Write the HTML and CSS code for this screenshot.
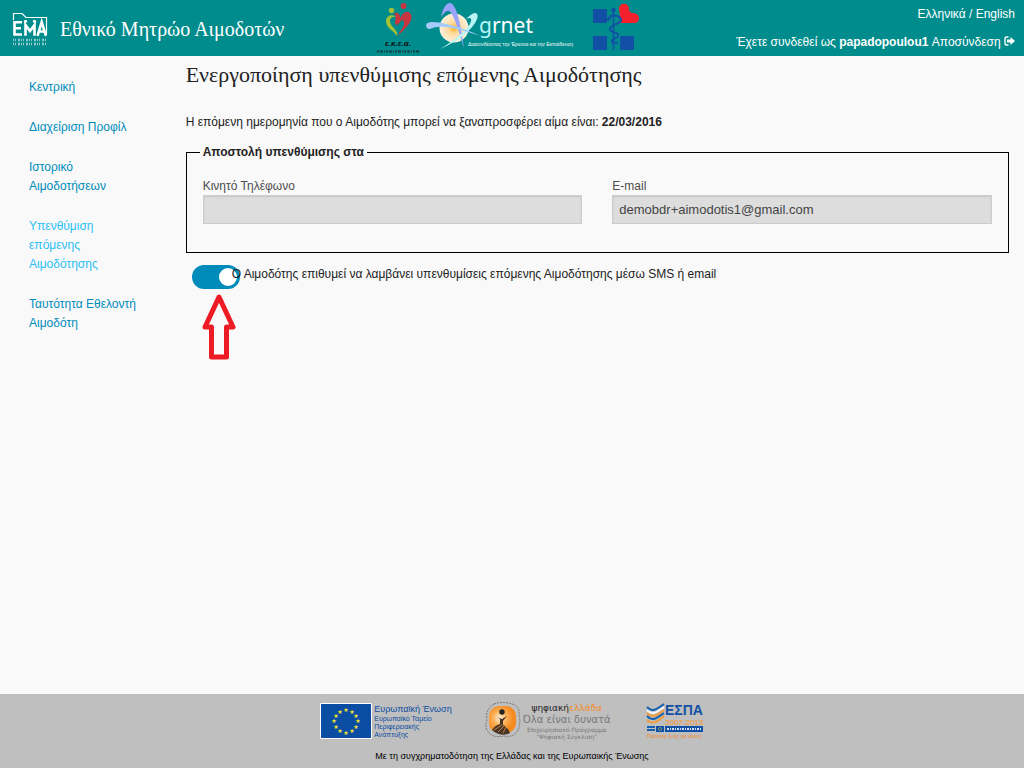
FILE: index.html
```html
<!DOCTYPE html>
<html lang="el">
<head>
    <meta charset="UTF-8">
    <meta name="viewport" content="width=device-width, initial-scale=1.0">
    <title>Εθνικό Μητρώο Αιμοδοτών</title>
    <link rel="stylesheet" href="styles.css">
</head>
<body>
    <header class="topbar">
        <div class="brand">
            <svg class="brand-logo" width="36" height="36" viewBox="0 0 36 36" role="img" aria-label="ΕΜΑ">
                <path d="M1.500 9V2.500H10l4 4H34.500V24" fill="none" stroke="#fff" stroke-width="1.200"/>
                <g fill="none" stroke="#fff" stroke-width="2.600">
                    <path d="M10 11.300H2.500V23.500H10M2.500 17.300H9"/>
                    <path d="M13.500 24.800V14l4.500 6 4.500-6v10.800"/>
                    <path d="M25.500 24.800L29.700 11l4.200 13.800M27 20.500h6"/>
                </g>
                <circle cx="13.500" cy="10.300" r="1.600" fill="#fff"/>
                <circle cx="22.500" cy="10.300" r="1.600" fill="#fff"/>
                <path d="M1 29H35M1 33H35" stroke="#8fcccc" stroke-width="2.500" stroke-dasharray="1 1 1 2 2 1"/>
            </svg>
            <span class="brand-name">Εθνικό Μητρώο Αιμοδοτών</span>
        </div>

        <div class="partners">
            <svg width="44" height="54" viewBox="0 0 44 54" role="img" aria-label="ε.κ.ε.α.">
                <circle cx="14.500" cy="10.500" r="2.700" fill="#a3c037"/>
                <circle cx="26.500" cy="6" r="2.900" fill="#c8373f"/>
                <path d="M20 17C14 13 9 16 9 21c0 7 7 9 11 15 2-6-7-9-7-15 0-4 4-5 7-4z" fill="#a3c037"/>
                <path d="M17 13c5-1 7 3 6 6 2-6 7-9 10-6 5 6-3 15-13 23 4-6 7-9 7-13 0-3-2-4-4-1-2 4-5 4-5 0 1-4 1-7-1-9z" fill="#c8373f"/>
                <text class="ekea-name" x="8" y="46">ε.κ.ε.α.</text>
                <path d="M0 51.500H43" stroke="#123f3f" stroke-width="2" stroke-dasharray="2 1 3 1 1 1"/>
            </svg>
            <svg width="162" height="54" viewBox="0 0 162 54" role="img" aria-label="grnet">
                <defs>
                    <radialGradient id="sun">
                        <stop offset="0" stop-color="#fdb31b"/>
                        <stop offset="0.400" stop-color="#fddba0"/>
                        <stop offset="1" stop-color="#fdf0dc"/>
                    </radialGradient>
                </defs>
                <circle cx="29" cy="28" r="14.500" fill="url(#sun)"/>
                <path d="M16 17C18 8 21 3 25 3c5 0 10 14 14 45C32 25 28 13 24 11c-3-1-5 3-8 6z" fill="#9aa3fa"/>
                <path d="M40 20c5-5 10-9 12-6 4 6-12 25-37 35 19-11 33-25 31-30-1-2-4-1-6 1z" fill="#b9f4f6"/>
                <path d="M2 28c-4-7 7-7 19-4 15 3 25 8 35 12-17-5-32-10-43-9-6 0-9 4-11 1z" fill="#a5cbfa"/>
                <text class="grnet-name" x="54" y="33"><tspan class="grnet-pale">g</tspan>rnet</text>
                <text class="grnet-tag" x="43" y="46">Διασυνδέοντας την Έρευνα και την Εκπαίδευση</text>
            </svg>
            <svg width="48" height="54" viewBox="0 0 48 54" role="img" aria-label="Υπουργείο Υγείας">
                <path d="M0 9h14v14H0zM0 36h14v14H0zM27 36h14v14H27z" fill="#1150a5"/>
                <path d="M26 9c0-7 10-7 10 0 0 2 1 3 3 4 3 0 7 1 7 5 0 3-2 5-5 5H28z" fill="#f5202c"/>
                <circle cx="20.500" cy="10" r="2.200" fill="#1150a5"/>
                <path d="M20.500 10V50" stroke="#1150a5" stroke-width="1.500"/>
                <path d="M16 18c2-4 10-3 12 1 2 5-11 5-11 10 0 4 10 3 8 7-1 3-6 2-6 5s5 2 6 1" fill="none" stroke="#1150a5" stroke-width="2"/>
                <path d="M10 22l3-3 2 1 3-4" fill="none" stroke="#1150a5" stroke-width="2"/>
            </svg>
        </div>

        <div class="account">
            <div class="languages"><a href="#">Ελληνικά</a> / <a href="#">English</a></div>
            <div class="session">
                Έχετε συνδεθεί ως <strong>papadopoulou1</strong>
                <a href="#">Αποσύνδεση
                    <svg width="11" height="10" viewBox="0 0 11 10" aria-hidden="true">
                        <path d="M4.500 1H2.500Q1 1 1 2.500V7.500Q1 9 2.500 9H4.500" fill="none" stroke="#fff" stroke-width="1.400"/>
                        <path d="M3 3.500H6.500V1L11 5 6.500 9V6.500H3z" fill="#fff"/>
                    </svg></a>
            </div>
        </div>
    </header>

    <div class="page">
        <nav class="sidebar">
            <a href="#">Κεντρική</a>
            <a href="#">Διαχείριση Προφίλ</a>
            <a href="#">Ιστορικό Αιμοδοτήσεων</a>
            <a href="#" class="active">Υπενθύμιση επόμενης Αιμοδότησης</a>
            <a href="#">Ταυτότητα Εθελοντή Αιμοδότη</a>
        </nav>

        <main class="content">
            <h1>Ενεργοποίηση υπενθύμισης επόμενης Αιμοδότησης</h1>
            <p class="next-date">Η επόμενη ημερομηνία που ο Αιμοδότης μπορεί να ξαναπροσφέρει αίμα είναι: <strong>22/03/2016</strong></p>

            <form>
                <fieldset>
                    <legend>Αποστολή υπενθύμισης στα</legend>
                    <div class="fields">
                        <div class="field">
                            <label for="phone">Κινητό Τηλέφωνο</label>
                            <input type="text" id="phone" readonly>
                        </div>
                        <div class="field">
                            <label for="email">E-mail</label>
                            <input type="text" id="email" value="demobdr+aimodotis1@gmail.com" readonly>
                        </div>
                    </div>
                </fieldset>

                <div class="reminder">
                    <input type="checkbox" id="reminder" class="switch" checked>
                    <label for="reminder">Ο Αιμοδότης επιθυμεί να λαμβάνει υπενθυμίσεις επόμενης Αιμοδότησης μέσω SMS ή email</label>
                    <svg class="pointer" width="36" height="68" viewBox="0 0 36 68" aria-hidden="true">
                        <path d="M18 4L32 34H25.500V64H10.500V34H4z" fill="none" stroke="#ed1c24" stroke-width="5" stroke-linejoin="round"/>
                    </svg>
                </div>
            </form>
        </main>
    </div>

    <footer class="footer">
        <div class="sponsors">
            <div class="eu">
                <svg width="52" height="36" viewBox="0 0 52 36" aria-hidden="true">
                    <path d="M.5.500h51v35H.5z" fill="#0b4da2" stroke="#fff"/>
                    <g class="eu-stars">
                        <text x="26" y="9">★</text><text x="32" y="11">★</text><text x="36" y="15">★</text>
                        <text x="38" y="20">★</text><text x="36" y="26">★</text><text x="32" y="30">★</text>
                        <text x="26" y="32">★</text><text x="20" y="30">★</text><text x="16" y="26">★</text>
                        <text x="14" y="20">★</text><text x="16" y="15">★</text><text x="20" y="11">★</text>
                    </g>
                </svg>
                <div class="eu-text">
                    <span class="eu-title">Ευρωπαϊκή Ένωση</span>
                    <span>Ευρωπαϊκό Ταμείο</span>
                    <span>Περιφερειακής</span>
                    <span>Ανάπτυξης</span>
                </div>
            </div>
            <div class="digital">
                <svg width="36" height="36" viewBox="0 0 36 36" aria-hidden="true">
                    <defs>
                        <radialGradient id="orb" cx="0.400" cy="0.450">
                            <stop offset="0" stop-color="#fff3df"/>
                            <stop offset="0.500" stop-color="#fbb25a"/>
                            <stop offset="1" stop-color="#f58a1f"/>
                        </radialGradient>
                    </defs>
                    <path d="M9 2Q18-1 27 2 35 4 34 13 36 22 33 28 29 36 19 34 9 36 4 31-1 26 2 18 0 7 9 2z" fill="none" stroke="#666" stroke-width=".8" stroke-dasharray="2 1"/>
                    <rect x="4" y="4" width="27" height="27" rx="10" fill="url(#orb)"/>
                    <circle cx="17" cy="10" r="2.700" fill="#222"/>
                    <path d="M12 15l5 2 5-3-4 5v4c4 2 6 5 7 8-5 3-13 2-18-3 3-4 5-5 8-6v-5z" fill="#493626"/>
                    <path d="M9 28l8-5M13 30l6-6M18 31l3-6" stroke="#f1a14d" stroke-width=".7"/>
                </svg>
                <div class="digital-text">
                    <span class="digital-title">ψηφιακή<b>ελλάδα</b></span>
                    <span class="digital-motto">Όλα είναι δυνατά</span>
                    <span>Επιχειρησιακό Πρόγραμμα</span>
                    <span>"Ψηφιακή Σύγκλιση"</span>
                </div>
            </div>
            <svg width="60" height="40" viewBox="0 0 60 40" role="img" aria-label="ΕΣΠΑ 2007-2013">
                <g fill="none" stroke-width="2">
                    <path d="M3 5c5 6 10 2 17-3" stroke="#1762ae"/>
                    <path d="M3 8c5 6 10 2 17-3" stroke="#f4f6f8"/>
                    <path d="M3 11c5 6 10 2 17-3" stroke="#f29a35"/>
                    <path d="M3 14c5 6 10 2 17-3" stroke="#1762ae"/>
                    <path d="M3 18c5 5 10 2 17-4" stroke="#f29a35"/>
                </g>
                <text class="espa-name" x="21" y="13">ΕΣΠΑ</text>
                <text class="espa-years" x="21" y="23">2007-2013</text>
                <path d="M3 25h8M3 28h8" stroke="#1762ae" stroke-width="2"/>
                <path d="M12 24h8v6h-8zM21 24h38v6H21z" fill="#1150a5"/>
                <path d="M23 27h34" stroke="#dce6f2" stroke-width="2" stroke-dasharray="2 1 1 1"/>
                <circle cx="16" cy="27" r="1.500" fill="none" stroke="#f6dc35" stroke-dasharray="1"/>
                <text class="espa-motto" x="3" y="36">Ποιότητα ζωής για όλους</text>
            </svg>
        </div>
        <p>Με τη συγχρηματοδότηση της Ελλάδας και της Ευρωπαικής Ένωσης</p>
    </footer>
</body>
</html>
```
FILE: styles.css
```css
* {
    box-sizing: border-box;
}
body {
    display: flex;
    flex-direction: column;
    min-height: 100vh;
    margin: 0;
    font-family: "Liberation Sans", Arial, sans-serif;
    font-size: 12px;
    color: #222;
    background-color: #f9f9f9;
}
a {
    color: #008cba;
    text-decoration: none;
}

/* header */
.topbar {
    display: grid;
    grid-template-columns: 1fr auto 1fr;
    min-height: 56px;
    padding: 0 9px 0 12px;
    color: #fff;
    background-color: #008c8c;
}
.topbar a {
    color: #fff;
}
.brand {
    display: flex;
    align-items: center;
    gap: 12px;
    padding-top: 2px;
}
.brand-name {
    font-family: "Liberation Serif", "Times New Roman", serif;
    font-size: 20px;
    white-space: nowrap;
}
.partners {
    display: flex;
    gap: 4px;
    padding-right: 10px;
}
.partners svg:last-child {
    margin-left: 2px;
}
.ekea-name {
    font: italic bold 8px "Liberation Sans", sans-serif;
    fill: #111;
}
.grnet-name {
    font: 21px "Noto Sans", sans-serif;
    fill: #fff;
}
.grnet-pale {
    fill: #b9f4f6;
}
.grnet-tag {
    font: 5px "Liberation Sans", sans-serif;
    fill: #fff;
}
.account {
    padding-top: 4px;
    line-height: 20px;
    text-align: right;
    white-space: nowrap;
}
.languages {
    margin-bottom: 8px;
}

/* page */
.page {
    display: grid;
    grid-template-columns: 1fr 5fr;
    flex: 1;
}
.sidebar {
    display: flex;
    flex-direction: column;
    gap: 21px;
    padding: 22px 24px 0 29px;
    line-height: 19px;
}
.sidebar .active {
    color: #2bbff5;
}
.content {
    padding: 3px 15px 0;
}
h1 {
    margin: 0 0 22px;
    font-family: "Liberation Serif", "Times New Roman", serif;
    font-size: 22px;
    font-weight: normal;
    line-height: 32px;
}
.next-date {
    margin: 0 0 11px;
    line-height: 19px;
}
fieldset {
    margin: 0;
    padding: 16px 16px 28px;
    border: 1px solid #000;
}
legend {
    margin-left: -3px;
    padding: 0 3px;
    font-weight: bold;
    line-height: 18px;
}
.fields {
    display: grid;
    grid-template-columns: 1fr 1fr;
    gap: 30px;
}
.field label {
    display: block;
    color: #4d4d4d;
    line-height: 18px;
}
.field input {
    display: block;
    width: 100%;
    height: 29px;
    padding: 0 6px;
    border: 1px solid #ccc;
    font: inherit;
    font-size: 13px;
    color: #444;
    background-color: #ddd;
    box-shadow: inset 0 1px 2px rgba(0,0,0,0.1);
}
.reminder {
    position: relative;
    display: flex;
    padding: 12px 6px 0;
}
.switch {
    flex: none;
    width: 48px;
    height: 24px;
    margin: 0;
    padding: 3px;
    appearance: none;
    border-radius: 12px;
    background-color: #ccc;
    cursor: pointer;
}
.switch::before {
    content: "";
    display: block;
    width: 18px;
    height: 18px;
    border-radius: 50%;
    background-color: #fff;
}
.switch:checked {
    background-color: #008cba;
}
.switch:checked::before {
    margin-left: auto;
}
.reminder label {
    margin-left: -8px;
    line-height: 18px;
}
.pointer {
    position: absolute;
    top: 40px;
    left: 15px;
}

/* footer */
.footer {
    padding: 8px 0 4px;
    background-color: #bfbfbf;
}
.footer p {
    margin: 0;
    font-size: 9px;
    line-height: 16px;
    color: #000;
    text-align: center;
}
.sponsors {
    display: flex;
    justify-content: center;
    gap: 33px;
    height: 46px;
}
.eu {
    display: flex;
    gap: 2px;
    color: #0b4da2;
}
.eu svg {
    margin-top: 1px;
}
.eu-stars {
    font: 6px "DejaVu Sans", sans-serif;
    text-anchor: middle;
    fill: #f4e52c;
}
.eu-text {
    display: flex;
    flex-direction: column;
    padding-top: 1px;
    font-size: 7px;
    line-height: 8px;
}
.eu-title {
    font-size: 9px;
    line-height: 12px;
}
.digital {
    display: flex;
    gap: 2px;
}
.digital-text {
    display: flex;
    flex-direction: column;
    padding-top: 1px;
    font-family: "DejaVu Sans", sans-serif;
    font-size: 6px;
    line-height: 7px;
    color: #777;
    text-align: center;
}
.digital-title {
    font-size: 9px;
    line-height: 11px;
    color: #222;
}
.digital-title b {
    font-weight: normal;
    color: #f58a1f;
}
.digital-motto {
    font-size: 10px;
    line-height: 12px;
}
.espa-name {
    font: bold 14px "Liberation Sans", sans-serif;
    fill: #1150a5;
}
.espa-years {
    font: 8px "Liberation Sans", sans-serif;
    fill: #f7941d;
}
.espa-motto {
    font: 5px "Liberation Sans", sans-serif;
    fill: #f28a1f;
}
```
